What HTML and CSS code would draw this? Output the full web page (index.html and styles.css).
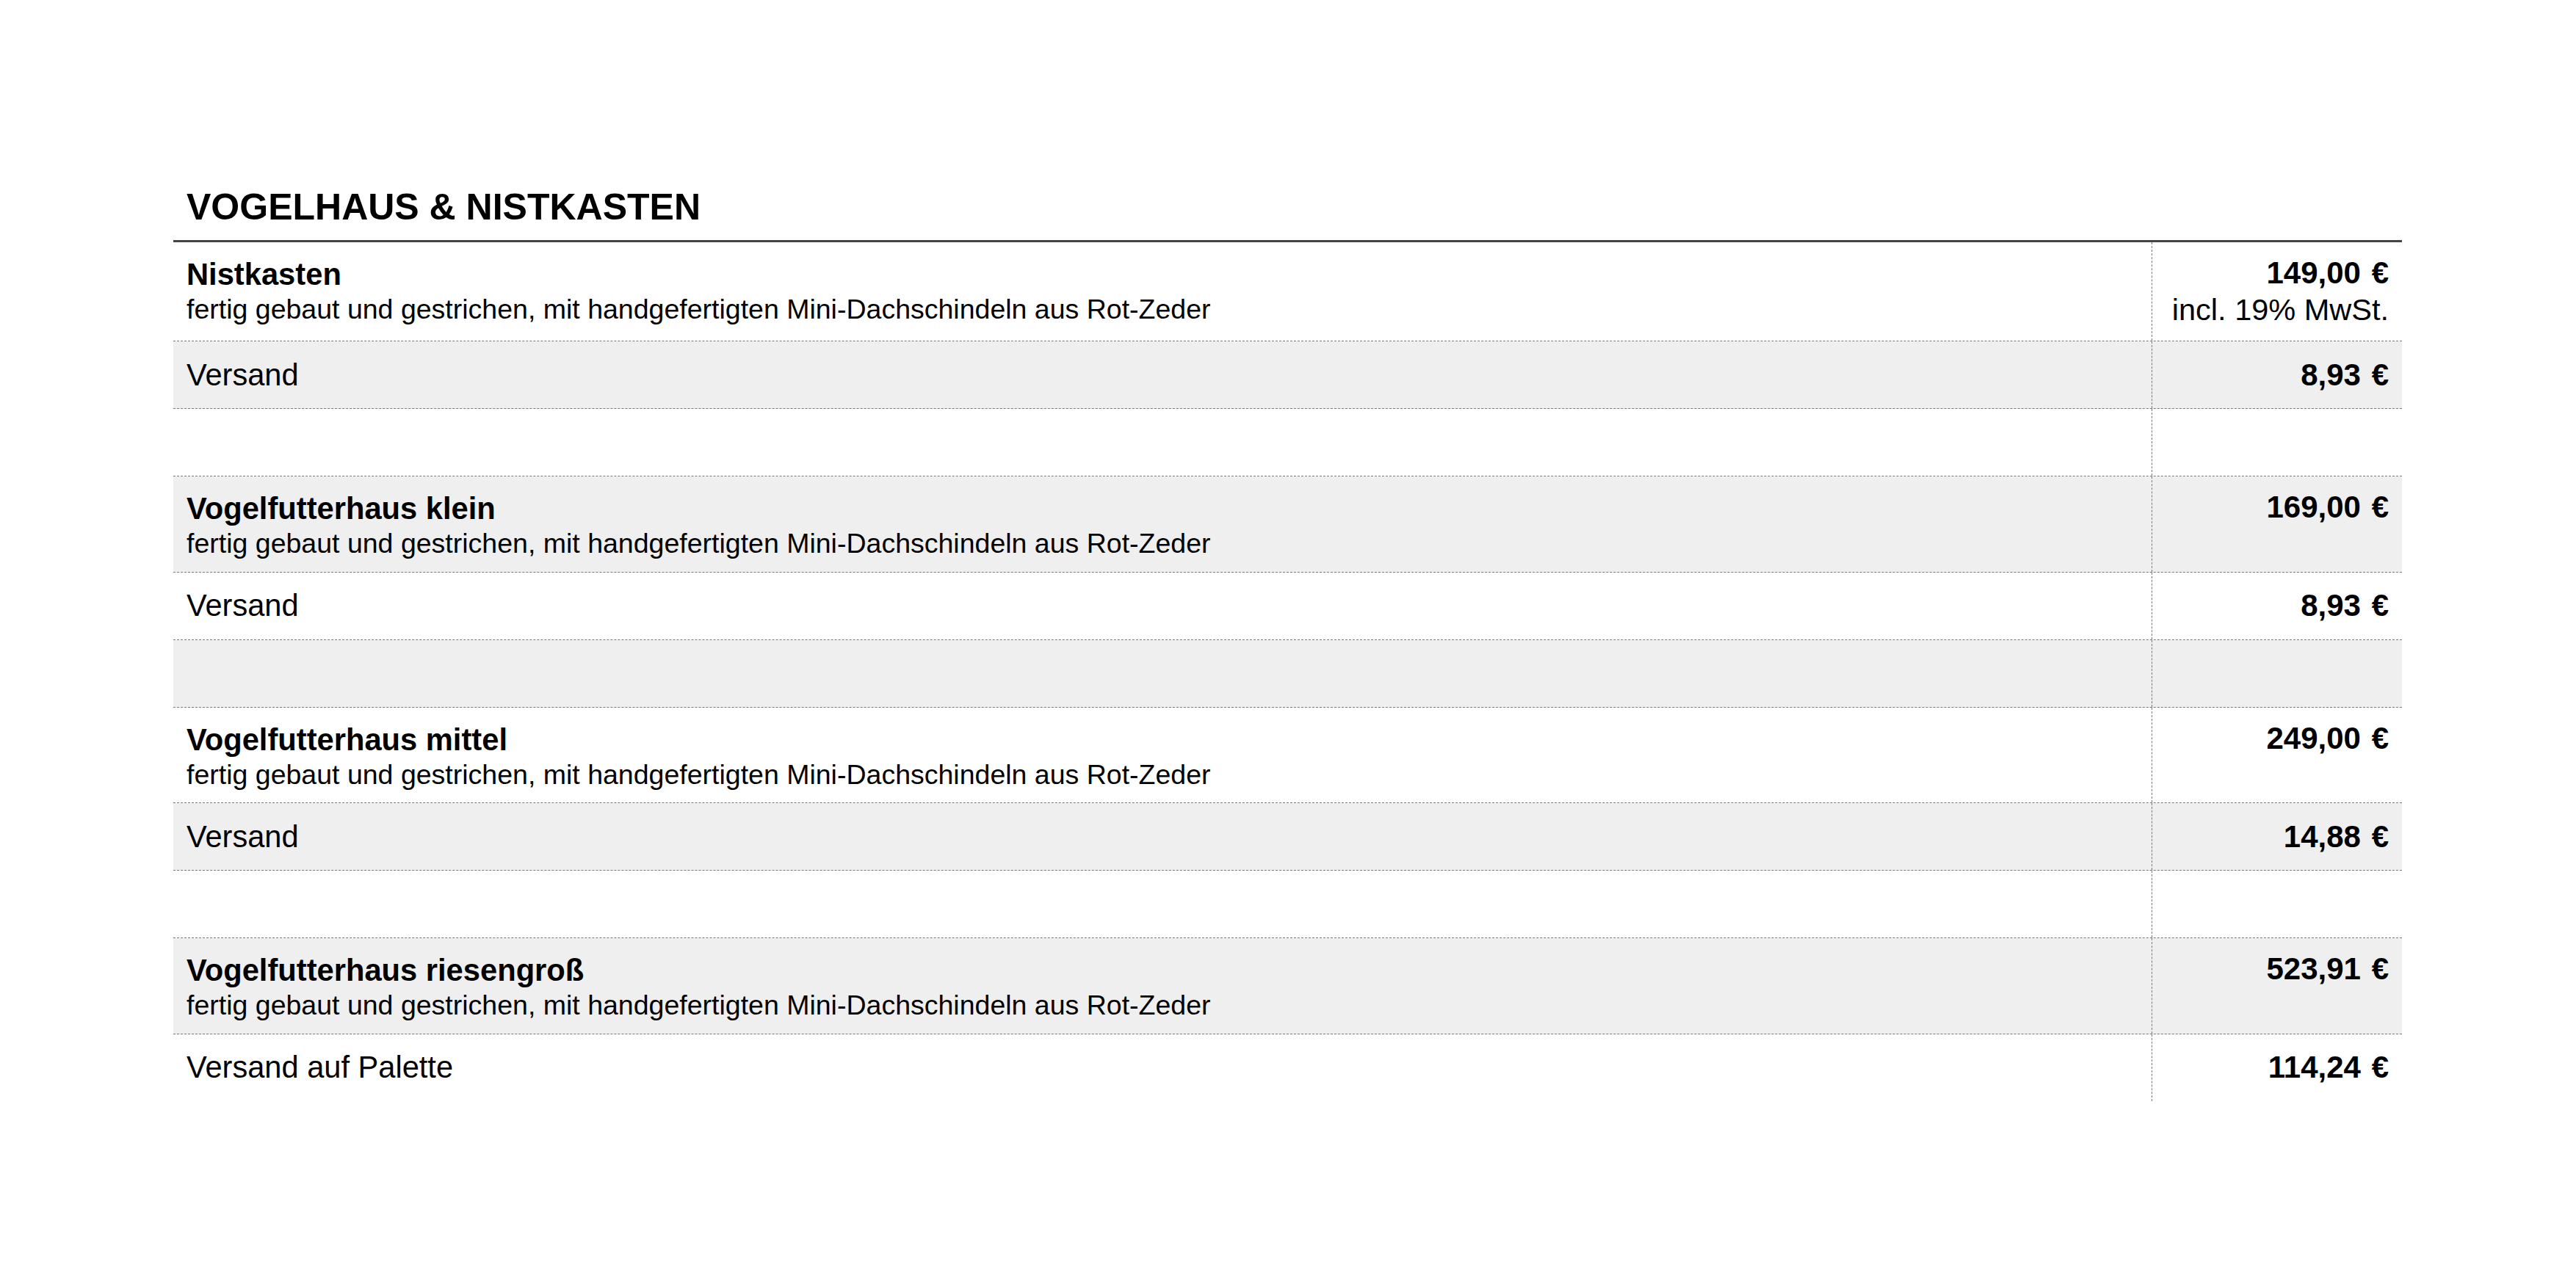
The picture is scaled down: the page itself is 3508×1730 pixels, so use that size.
FILE: index.html
```html
<!DOCTYPE html>
<html lang="de">
<head>
<meta charset="utf-8">
<title>Vogelhaus &amp; Nistkasten</title>
<link rel="stylesheet" href="styles.css">
</head>
<body>
<div class="sheet">
  <h1 class="title">VOGELHAUS &amp; NISTKASTEN</h1>
  <div class="table">
    <div class="row product">
      <div class="cell item">
        <div class="name">Nistkasten</div>
        <div class="sub">fertig gebaut und gestrichen, mit handgefertigten Mini-Dachschindeln aus Rot-Zeder</div>
      </div>
      <div class="cell price">
        <div class="amount">149,00 €</div>
        <div class="tax">incl. 19% MwSt.</div>
      </div>
    </div>
    <div class="row single">
      <div class="cell item">Versand</div>
      <div class="cell price"><span class="amount">8,93 €</span></div>
    </div>
    <div class="row spacer">
      <div class="cell item"></div>
      <div class="cell price"></div>
    </div>
    <div class="row product">
      <div class="cell item">
        <div class="name">Vogelfutterhaus klein</div>
        <div class="sub">fertig gebaut und gestrichen, mit handgefertigten Mini-Dachschindeln aus Rot-Zeder</div>
      </div>
      <div class="cell price">
        <div class="amount">169,00 €</div>
      </div>
    </div>
    <div class="row single">
      <div class="cell item">Versand</div>
      <div class="cell price"><span class="amount">8,93 €</span></div>
    </div>
    <div class="row spacer">
      <div class="cell item"></div>
      <div class="cell price"></div>
    </div>
    <div class="row product">
      <div class="cell item">
        <div class="name">Vogelfutterhaus mittel</div>
        <div class="sub">fertig gebaut und gestrichen, mit handgefertigten Mini-Dachschindeln aus Rot-Zeder</div>
      </div>
      <div class="cell price">
        <div class="amount">249,00 €</div>
      </div>
    </div>
    <div class="row single">
      <div class="cell item">Versand</div>
      <div class="cell price"><span class="amount">14,88 €</span></div>
    </div>
    <div class="row spacer">
      <div class="cell item"></div>
      <div class="cell price"></div>
    </div>
    <div class="row product">
      <div class="cell item">
        <div class="name">Vogelfutterhaus riesengroß</div>
        <div class="sub">fertig gebaut und gestrichen, mit handgefertigten Mini-Dachschindeln aus Rot-Zeder</div>
      </div>
      <div class="cell price">
        <div class="amount">523,91 €</div>
      </div>
    </div>
    <div class="row single">
      <div class="cell item">Versand auf Palette</div>
      <div class="cell price"><span class="amount">114,24 €</span></div>
    </div>
  </div>
</div>
</body>
</html>
```
FILE: styles.css
```css
html, body {
  margin: 0;
  padding: 0;
  background: #ffffff;
}

body {
  font-family: "Liberation Sans", Arial, Helvetica, sans-serif;
  color: #000000;
}

.sheet {
  width: 3035px;
  padding: 254px 0 0 236px;
}

.title {
  margin: 0;
  padding: 0 18px 16px;
  font-size: 50px;
  font-weight: 700;
  line-height: 57px;
  border-bottom: 3px solid #444444;
}

.table {
  display: flex;
  flex-direction: column;
}

.row {
  display: grid;
  grid-template-columns: 1fr 341px;
  border-bottom: 1px dashed #7a7a7a;
  background: #ffffff;
}

.row:nth-child(even) {
  background: #efefef;
}

.row:last-child {
  border-bottom: none;
}

.cell {
  padding: 17px 18px;
  font-size: 41.6px;
  line-height: 50px;
}

.price {
  border-left: 1px dashed #7a7a7a;
  text-align: right;
  font-size: 42px;
  font-weight: 700;
}

.amount {
  word-spacing: 3px;
}

.tax {
  font-size: 41.5px;
  font-weight: 400;
}

.name {
  font-size: 41.7px;
  font-weight: 700;
  line-height: 53px;
}

.sub {
  font-size: 37.5px;
  line-height: 42.5px;
}

.single {
  min-height: 91px;
}

.single .cell {
  padding-top: 0;
  padding-bottom: 0;
  display: flex;
  align-items: center;
}

.single .price {
  justify-content: flex-end;
}

.spacer {
  height: 91px;
}

.spacer .cell {
  padding: 0;
}
```
